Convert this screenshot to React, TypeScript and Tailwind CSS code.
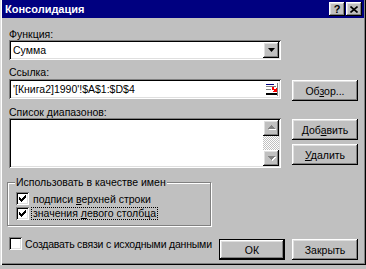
import React from 'react';

const raised =
  'shadow-[inset_-1px_-1px_#000,inset_1px_1px_#fff,inset_-2px_-2px_#808080,inset_2px_2px_#dfdfdf]';
const sunken =
  'shadow-[inset_1px_1px_#808080,inset_-1px_-1px_#fff,inset_2px_2px_#000,inset_-2px_-2px_#dfdfdf]';

// 7x7 pixel check mark, one rect per row run
const checkRows: [number, number, number][] = [
  [6, 0, 1],
  [5, 1, 2],
  [0, 2, 1],
  [4, 2, 3],
  [0, 3, 2],
  [3, 3, 3],
  [0, 4, 5],
  [1, 5, 3],
  [2, 6, 1],
];

const Check = () => (
  <svg width="7" height="7" viewBox="0 0 7 7" shapeRendering="crispEdges">
    {checkRows.map(([x, y, w], i) => (
      <rect key={i} x={x} y={y} width={w} height={1} fill="#000" />
    ))}
  </svg>
);

const CheckBox = ({ checked }: { checked?: boolean }) => (
  <div className={`w-[13px] h-[13px] shrink-0 bg-white flex items-center justify-center ${sunken}`}>
    {checked && <Check />}
  </div>
);

const Button = ({ children, className = '' }: { children: React.ReactNode; className?: string }) => (
  <div className={`w-[66px] h-[21px] bg-[#c0c0c0] flex items-center justify-center ${raised} ${className}`}>
    {children}
  </div>
);

const Arrow = ({ down }: { down?: boolean }) => (
  <svg width="9" height="6" viewBox="0 0 9 6" shapeRendering="crispEdges">
    <path d={down ? 'M2 2h7l-3.5 4z' : 'M2 5h7l-3.5-4z'} fill="#fff" />
    <path d={down ? 'M1 1h7l-3.5 4z' : 'M1 4h7l-3.5-4z'} fill="#808080" />
  </svg>
);

const RefIcon = () => (
  <svg width="13" height="13" viewBox="0 0 13 13" shapeRendering="crispEdges">
    <rect x="0" y="0" width="13" height="13" fill="#fff" />
    <rect x="1" y="1" width="8" height="1" fill="#000080" />
    <rect x="1" y="3" width="10" height="1" fill="#808080" />
    <rect x="1" y="6" width="5" height="1" fill="#808080" />
    <path d="M7 4h2v2h2v-1h1v4h-4v-1h1v-1h-2z" fill="#ff0000" />
    <rect x="1" y="10" width="11" height="2" fill="#000" />
    <rect x="12" y="0" width="1" height="13" fill="#808080" />
  </svg>
);

export default function App() {
  return (
    <div
      className="w-[366px] h-[269px] bg-[#c0c0c0] overflow-hidden text-[10.5px] leading-[12px] text-black whitespace-nowrap"
      style={{ fontFamily: '"Liberation Sans", Arial, sans-serif' }}
    >
      <div className="h-[265px] px-[2px] shadow-[inset_1px_0_#dfdfdf,inset_2px_0_#fff,inset_-1px_-1px_#000,inset_-2px_-2px_#808080]">
        {/* title bar */}
        <div className="h-[18px] bg-[#000080] flex items-center pl-[3px] pr-[2px]">
          <span className="text-white font-bold text-[11px] flex-1">Консолидация</span>
          <div className={`w-[16px] h-[14px] bg-[#c0c0c0] flex items-center justify-center font-bold text-[11px] ${raised}`}>
            ?
          </div>
          <div className={`w-[16px] h-[14px] ml-[1px] bg-[#c0c0c0] flex items-center justify-center ${raised}`}>
            <svg width="8" height="7" viewBox="0 0 8 7">
              <path d="M0.5 0.5l7 6M7.5 0.5l-7 6" stroke="#000" strokeWidth="1.6" />
            </svg>
          </div>
        </div>

        <div className="pl-[7px] pr-[6px]">
          <div className="flex gap-[11px]">
            <div className="w-[272px] flex flex-col">
              <div className="mt-[10px] h-[12px]">Функция:</div>
              <div className={`h-[20px] bg-white flex items-center pl-[4px] pr-[2px] ${sunken}`}>
                <span className="flex-1">Сумма</span>
                <div className={`w-[16px] h-[16px] bg-[#c0c0c0] flex items-center justify-center ${raised}`}>
                  <svg width="7" height="4" viewBox="0 0 7 4">
                    <path d="M0 0h7l-3.5 4z" fill="#000" />
                  </svg>
                </div>
              </div>
              <div className="mt-[6px] h-[12px]">Ссылка:</div>
              <div className={`mt-[1px] h-[20px] bg-white flex items-center pl-[4px] pr-[3px] ${sunken}`}>
                <span className="flex-1">'[Книга2]1990'!$A$1:$D$4</span>
                <RefIcon />
              </div>
              <div className="mt-[7px] h-[12px]">Список диапазонов:</div>
              <div className={`h-[50px] bg-white flex justify-end p-[2px] ${sunken}`}>
                <div className="w-[16px] flex flex-col">
                  <div className={`h-[16px] bg-[#c0c0c0] flex items-center justify-center ${raised}`}>
                    <Arrow />
                  </div>
                  <div className="flex-1 bg-[image:repeating-conic-gradient(#c0c0c0_0%_25%,#fff_0%_50%)] bg-[length:2px_2px]" />
                  <div className={`h-[16px] bg-[#c0c0c0] flex items-center justify-center ${raised}`}>
                    <Arrow down />
                  </div>
                </div>
              </div>
            </div>
            <div className="w-[66px] flex flex-col">
              <Button className="mt-[62px] h-[20px]">
                <span>
                  Об<u>з</u>ор...
                </span>
              </Button>
              <Button className="mt-[18px]">
                <span>
                  Доб<u>а</u>вить
                </span>
              </Button>
              <Button className="mt-[4px]">
                <span>
                  <u>У</u>далить
                </span>
              </Button>
            </div>
          </div>

          {/* group box */}
          <div className="relative mt-[14px] -ml-[2px] w-[204px] h-[44px] border border-[#808080] shadow-[inset_1px_1px_#fff,1px_1px_#fff]">
            <span className="absolute left-[7px] -top-[7px] px-[1px] bg-[#c0c0c0]">
              Использовать в качестве имен
            </span>
            <div className="flex flex-col gap-[2px] pl-[8px] pt-[9px]">
              <div className="flex items-center gap-[4px]">
                <CheckBox checked />
                <span>
                  подписи <u>в</u>ерхней строки
                </span>
              </div>
              <div className="flex items-center gap-[2px]">
                <CheckBox checked />
                <span className="border border-dotted border-black px-[1px] leading-[11px]">
                  значения <u>л</u>евого столбца
                </span>
              </div>
            </div>
          </div>

          {/* bottom row */}
          <div className="mt-[11px] flex items-start">
            <div className="flex items-center gap-[3px] flex-1 min-w-0 tracking-[-0.2px]">
              <CheckBox />
              <span>Создавать связи с исходными данными</span>
            </div>
            <div className="flex gap-[7px] mt-[2px] shrink-0">
              <Button className="border border-black">
                <span>ОК</span>
              </Button>
              <Button>
                <span>Закрыть</span>
              </Button>
            </div>
          </div>
        </div>
      </div>
    </div>
  );
}
